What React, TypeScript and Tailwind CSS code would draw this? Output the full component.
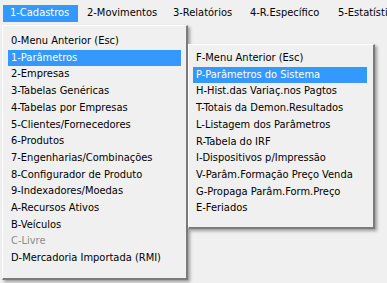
import React from "react";

const topMenu = [
  { label: "1-Cadastros", w: "w-[75px]", active: true },
  { label: "2-Movimentos", w: "w-[84px]" },
  { label: "3-Relatórios", w: "w-[75px]" },
  { label: "4-R.Específico", w: "w-[86px]" },
  { label: "5-Estatísticas", w: "w-[90px]" },
];

const cadastros = [
  "0-Menu Anterior (Esc)",
  "1-Parâmetros",
  "2-Empresas",
  "3-Tabelas Genéricas",
  "4-Tabelas por Empresas",
  "5-Clientes/Fornecedores",
  "6-Produtos",
  "7-Engenharias/Combinações",
  "8-Configurador de Produto",
  "9-Indexadores/Moedas",
  "A-Recursos Ativos",
  "B-Veículos",
  "C-Livre",
  "D-Mercadoria Importada (RMI)",
];

const parametros = [
  "F-Menu Anterior (Esc)",
  "P-Parâmetros do Sistema",
  "H-Hist.das Variaç.nos Pagtos",
  "T-Totais da Demon.Resultados",
  "L-Listagem dos Parâmetros",
  "R-Tabela do IRF",
  "I-Dispositivos p/Impressão",
  "V-Parâm.Formação Preço Venda",
  "G-Propaga Parâm.Form.Preço",
  "E-Feriados",
];

const MenuItem = ({ label, active, disabled }: { label: string; active?: boolean; disabled?: boolean }) => (
  <div
    className={`h-[16.7px] flex items-center pl-[3px] whitespace-nowrap ${
      active ? "bg-[#3399ff] text-white" : disabled ? "text-[#8d8d8d]" : "text-black"
    }`}
  >
    {label}
  </div>
);

export default function App() {
  return (
    <div
      className="relative w-[387px] h-[283px] bg-[#f0f0f0] overflow-hidden text-[11px]"
      style={{ fontFamily: '"DejaVu Sans Condensed", "DejaVu Sans", sans-serif' }}
    >
      {/* menu bar */}
      <div className="flex pt-[5px] pl-[3px] gap-[2px]">
        {topMenu.map((m) => (
          <div
            key={m.label}
            className={`${m.w} shrink-0 h-[17px] flex items-center pl-[7px] whitespace-nowrap ${
              m.active ? "bg-[#3399ff] text-white" : "text-black"
            }`}
          >
            {m.label}
          </div>
        ))}
      </div>

      {/* cadastros dropdown */}
      <div className="absolute left-[2px] top-[25px] w-[186px] bg-[#f0f0f0] border-l border-t border-white border-r-2 border-b-2 border-r-[#7b7b7b] border-b-[#7b7b7b] shadow-[2px_2px_3px_rgba(0,0,0,0.35)] pt-[7px] pb-[11px] pl-[5px] pr-[5px]">
        {cadastros.map((c, i) => (
          <MenuItem key={c} label={c} active={i === 1} disabled={c === "C-Livre"} />
        ))}
      </div>

      {/* parametros submenu */}
      <div className="absolute left-[188px] top-[44px] w-[187px] bg-[#f0f0f0] border-l border-t border-white border-r-2 border-b-2 border-r-[#7b7b7b] border-b-[#7b7b7b] shadow-[2px_2px_3px_rgba(0,0,0,0.35)] pt-[5px] pb-[10px] pl-[4px] pr-[6px]">
        {parametros.map((p, i) => (
          <MenuItem key={p} label={p} active={i === 1} />
        ))}
      </div>
    </div>
  );
}
